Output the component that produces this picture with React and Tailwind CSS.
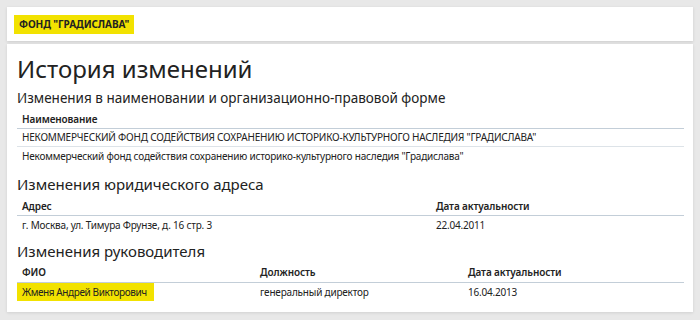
const font = { fontFamily: '"Noto Sans", "Open Sans", sans-serif' };

const HeaderCell = ({ children }) => (
    <div className="px-[5px] text-[10px] font-semibold text-[#222] tracking-[-0.1px]">{children}</div>
);

const Table = ({ cols, head, rows, headClass = "h-[20px]" }) => {
    return (
        <div>
            <div className={"grid items-center border-b border-[#c3ced8] " + headClass} style={{ gridTemplateColumns: cols }}>
                {head.map((h) => (
                    <HeaderCell key={h}>{h}</HeaderCell>
                ))}
            </div>
            {rows.map((row, i) => (
                <div
                    key={i}
                    className={"grid items-center " + (i < rows.length - 1 ? "h-[18px] border-b border-[#dde3e8]" : "h-[19px]")}
                    style={{ gridTemplateColumns: cols }}
                >
                    {row.map((cell, j) => (
                        <div key={j} className="px-[5px] text-[10px] tracking-[-0.2px] text-[#222] whitespace-nowrap">
                            {cell}
                        </div>
                    ))}
                </div>
            ))}
        </div>
    );
};

export default function App() {
    return (
        <div className="w-[700px] h-[320px] bg-[#e8e8e8] px-[7px] pt-[7px] overflow-hidden" style={font}>
            <div className="h-[34px] bg-white shadow-[0_1px_3px_rgba(0,0,0,0.12)] flex items-center px-[7px]">
                <span className="bg-[#f2e200] px-[5px] h-[19px] flex items-center text-[10px] font-bold text-[#222] uppercase tracking-[-0.1px]">
                    Фонд "Градислава"
                </span>
            </div>
            <div className="mt-[3px] h-[268px] bg-white shadow-[0_1px_3px_rgba(0,0,0,0.1)] pl-[10px] pr-[9px] pt-[10px]">
                <h1 className="text-[24px] leading-[30px] text-[#222]">История изменений</h1>
                <h2 className="mt-[4px] text-[13.5px] leading-[20px] text-[#222]">
                    Изменения в наименовании и организационно-правовой форме
                </h2>
                <div className="mt-[2px]">
                    <Table
                        cols="1fr"
                        headClass="h-[19px]"
                        head={["Наименование"]}
                        rows={[
                            ['НЕКОММЕРЧЕСКИЙ ФОНД СОДЕЙСТВИЯ СОХРАНЕНИЮ ИСТОРИКО-КУЛЬТУРНОГО НАСЛЕДИЯ "ГРАДИСЛАВА"'],
                            ['Некоммерческий фонд содействия сохранению историко-культурного наследия "Градислава"'],
                        ]}
                    />
                </div>
                <h2 className="mt-[8px] text-[15px] leading-[20px] text-[#222]">Изменения юридического адреса</h2>
                <div className="mt-[4px]">
                    <Table
                        cols="414px 1fr"
                        headClass="h-[18px]"
                        head={["Адрес", "Дата актуальности"]}
                        rows={[["г. Москва, ул. Тимура Фрунзе, д. 16 стр. 3", "22.04.2011"]]}
                    />
                </div>
                <h2 className="mt-[6px] text-[15px] leading-[20px] text-[#222]">Изменения руководителя</h2>
                <div className="mt-[2px]">
                    <div className="grid h-[20px] items-center border-b border-[#c3ced8]" style={{ gridTemplateColumns: "238px 208px 1fr" }}>
                        <HeaderCell>ФИО</HeaderCell>
                        <HeaderCell>Должность</HeaderCell>
                        <HeaderCell>Дата актуальности</HeaderCell>
                    </div>
                    <div className="grid h-[18px] items-center text-[10px] tracking-[-0.2px] text-[#222]" style={{ gridTemplateColumns: "238px 208px 1fr" }}>
                        <div>
                            <span className="inline-flex h-[18px] items-center bg-[#f2e200] pl-[5px] pr-[7px] tracking-[-0.4px]">Жменя Андрей Викторович</span>
                        </div>
                        <div className="px-[5px]">генеральный директор</div>
                        <div className="px-[5px]">16.04.2013</div>
                    </div>
                </div>
            </div>
        </div>
    );
}
